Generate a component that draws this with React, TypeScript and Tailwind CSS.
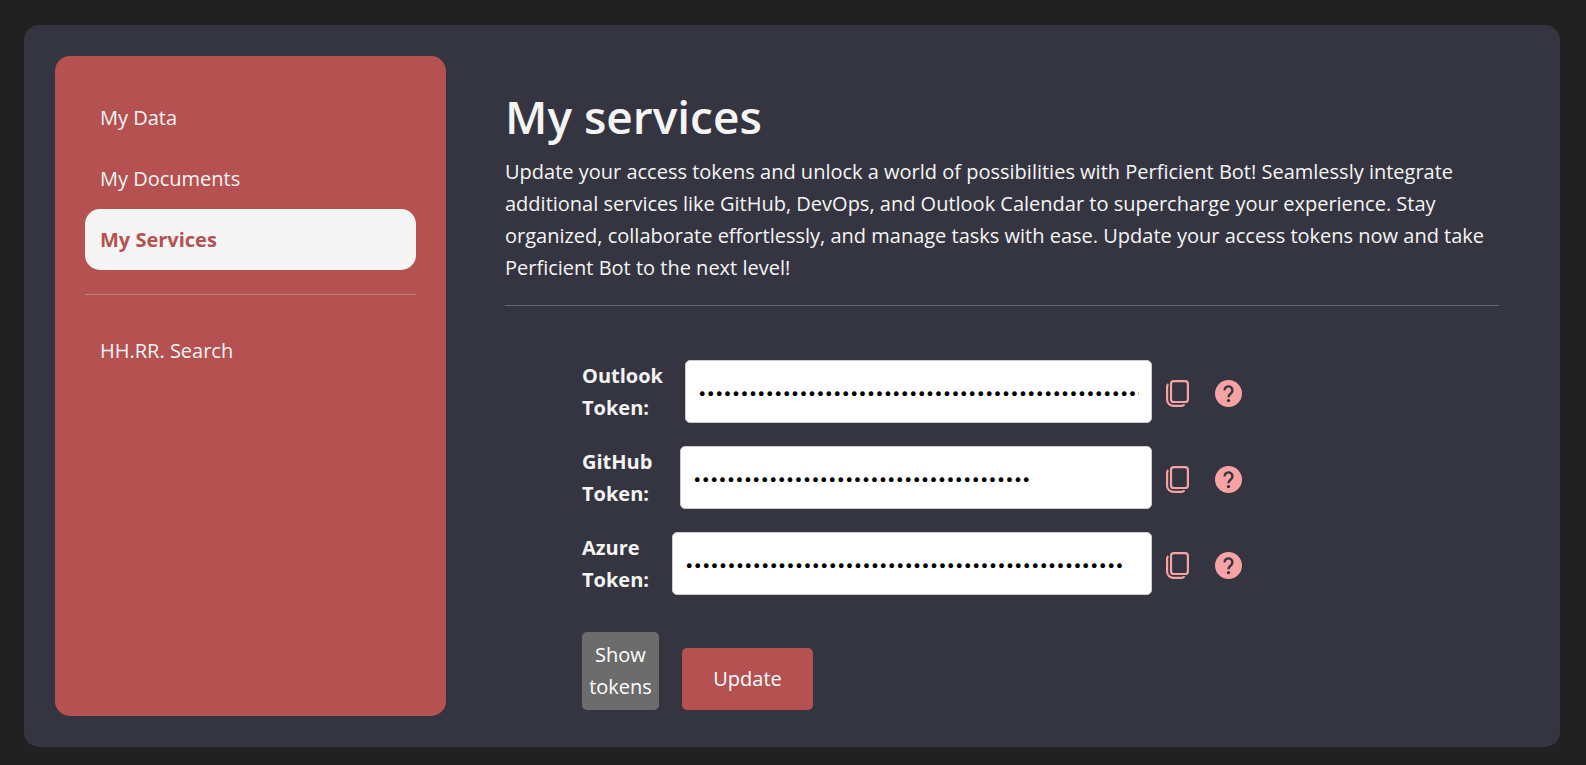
import { useState } from "react";

type Token = { id: string; label: string; length: number; labelClass: string };

const tokens: Token[] = [
  { id: "outlook", label: "Outlook Token:", length: 64, labelClass: "w-[103px] pr-4" },
  { id: "github", label: "GitHub Token:", length: 40, labelClass: "w-[98px] pr-4" },
  { id: "azure", label: "Azure Token:", length: 52, labelClass: "w-[90px] pr-4" },
];

const links = ["My Data", "My Documents", "My Services"];

function CopyIcon() {
  return (
    <svg viewBox="0 0 23 27" className="h-[27px] w-[23px]" fill="none" stroke="currentColor" aria-hidden="true">
      <rect x="5" y="1.1" width="16.9" height="20.9" rx="2.8" strokeWidth="2.2" />
      <path d="M2.3 4.2C1.500 4.800 1.100 5.500 1.100 6.600V19.800a6 6 0 0 0 6 6H15.800c1.300 0 2.100-.5 2.700-1.500" strokeWidth="2.200" />
    </svg>
  );
}

function HelpIcon() {
  return (
    <svg viewBox="0 0 27 27" className="size-[27px]" aria-hidden="true">
      <circle cx="13.5" cy="13.5" r="13.5" fill="currentColor" />
      <path
        d="M9.600 10.400a3.900 3.900 0 1 1 6.600 2.700c-1.300 1.300-2.700 1.800-2.700 4.200"
        fill="none"
        stroke="#353541"
        strokeWidth="2.400"
      />
      <circle cx="13.500" cy="20.600" r="1.700" fill="#353541" />
    </svg>
  );
}

export default function App() {
  const [visible, setVisible] = useState(false);

  return (
    <div className="flex min-h-screen flex-col bg-[#212121] pt-[25px] pr-[26px] pb-[18px] pl-[24px] font-['Open_Sans','Noto_Sans',sans-serif] text-[20px] leading-[32px] text-[#f5f5f5]">
      <div className="flex grow rounded-[15px] bg-[#353541] p-[31px]">
        <nav className="w-[391px] shrink-0 rounded-[15px] bg-[#b55151] px-[30px] py-[31px] leading-[31px]">
          <ul>
            {links.map((name) => (
              <li key={name}>
                <a
                  href="#"
                  className={
                    name === "My Services"
                      ? "block rounded-[15px] bg-[#f5f5f5] p-[15px] font-bold text-[#b55151]"
                      : "block rounded-[15px] p-[15px]"
                  }
                >
                  {name}
                </a>
              </li>
            ))}
          </ul>
          <hr className="mt-[24px] mb-[25px] border-t border-white/25" />
          <a href="#" className="block rounded-[15px] p-[15px]">
            HH.RR. Search
          </a>
        </nav>

        <main className="min-w-0 grow pt-[31px] pr-[30px] pl-[59px]">
          <h1 className="text-[46px] leading-[58px] font-semibold">My services</h1>
          <p className="mt-[11px]">
            Update your access tokens and unlock a world of possibilities with Perficient Bot! Seamlessly integrate
            additional services like GitHub, DevOps, and Outlook Calendar to supercharge your experience. Stay
            organized, collaborate effortlessly, and manage tasks with ease. Update your access tokens now and take
            Perficient Bot to the next level!
          </p>
          <hr className="mt-[21px] border-t border-white/25" />

          <form className="pt-[54px] pl-[77px]" onSubmit={(e) => e.preventDefault()}>
            <div className="flex flex-col gap-[22px]">
              {tokens.map((t) => (
                <div key={t.id} className="flex items-center">
                  <div className="flex w-[570px] items-start">
                    <label htmlFor={t.id} className={`shrink-0 font-bold ${t.labelClass}`}>
                      {t.label}
                    </label>
                    <input
                      id={t.id}
                      type={visible ? "text" : "password"}
                      defaultValue={"x".repeat(t.length)}
                      className="h-[63px] min-w-0 grow rounded-[5px] border border-[#ccc] bg-white px-[12px] pt-[2px] font-['Inter',sans-serif] text-[15px] text-black"
                    />
                  </div>
                  <button type="button" aria-label={`Copy ${t.label}`} className="ml-[14px] pt-[2px] text-[#f8a3a3]">
                    <CopyIcon />
                  </button>
                  <button type="button" aria-label={`Help ${t.label}`} className="ml-[26px] pt-[2px] text-[#f8a3a3]">
                    <HelpIcon />
                  </button>
                </div>
              ))}
            </div>
            <div className="mt-[36px] flex items-end gap-[23px]">
              <button
                type="button"
                onClick={() => setVisible(!visible)}
                className="w-[77px] rounded-[5px] bg-[#6c6c6c] py-[7px] text-white"
              >
                Show tokens
              </button>
              <button type="submit" className="h-[62px] w-[131px] rounded-[5px] bg-[#b55151] text-white">
                Update
              </button>
            </div>
          </form>
        </main>
      </div>
    </div>
  );
}
